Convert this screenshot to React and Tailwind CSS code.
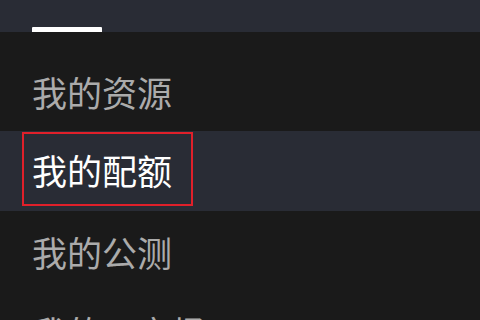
import React from "react";

const items = ["我的资源", "我的配额", "我的公测", "我的云市场"];

const App = () => {
  const active = 1;

  return (
    <div
      className="w-[480px] h-[320px] overflow-hidden bg-[#1a1a1a]"
      style={{ fontFamily: '"Noto Sans CJK SC", "Noto Sans", sans-serif' }}
    >
      <div className="h-8 bg-[#292c35] flex items-end pl-8">
        <div className="w-[70px] h-[5px] bg-white rounded-t-[1px]"></div>
      </div>

      <ul className="pt-[19px]">
        {items.map((item, i) =>
          i === active ? (
            <li key={item} className="h-[80px] bg-[#292c35] pt-[1px]">
              <div className="ml-[22px] w-[171px] h-[74px] border-2 border-[#e0202a] flex items-center pl-[8px]">
                <span className="text-[35px] leading-none text-white">{item}</span>
              </div>
            </li>
          ) : (
            <li key={item} className="h-[80px] flex items-center pl-8">
              <span className="text-[35px] leading-none text-[#ababab]">{item}</span>
            </li>
          )
        )}
      </ul>
    </div>
  );
};

export default App;
